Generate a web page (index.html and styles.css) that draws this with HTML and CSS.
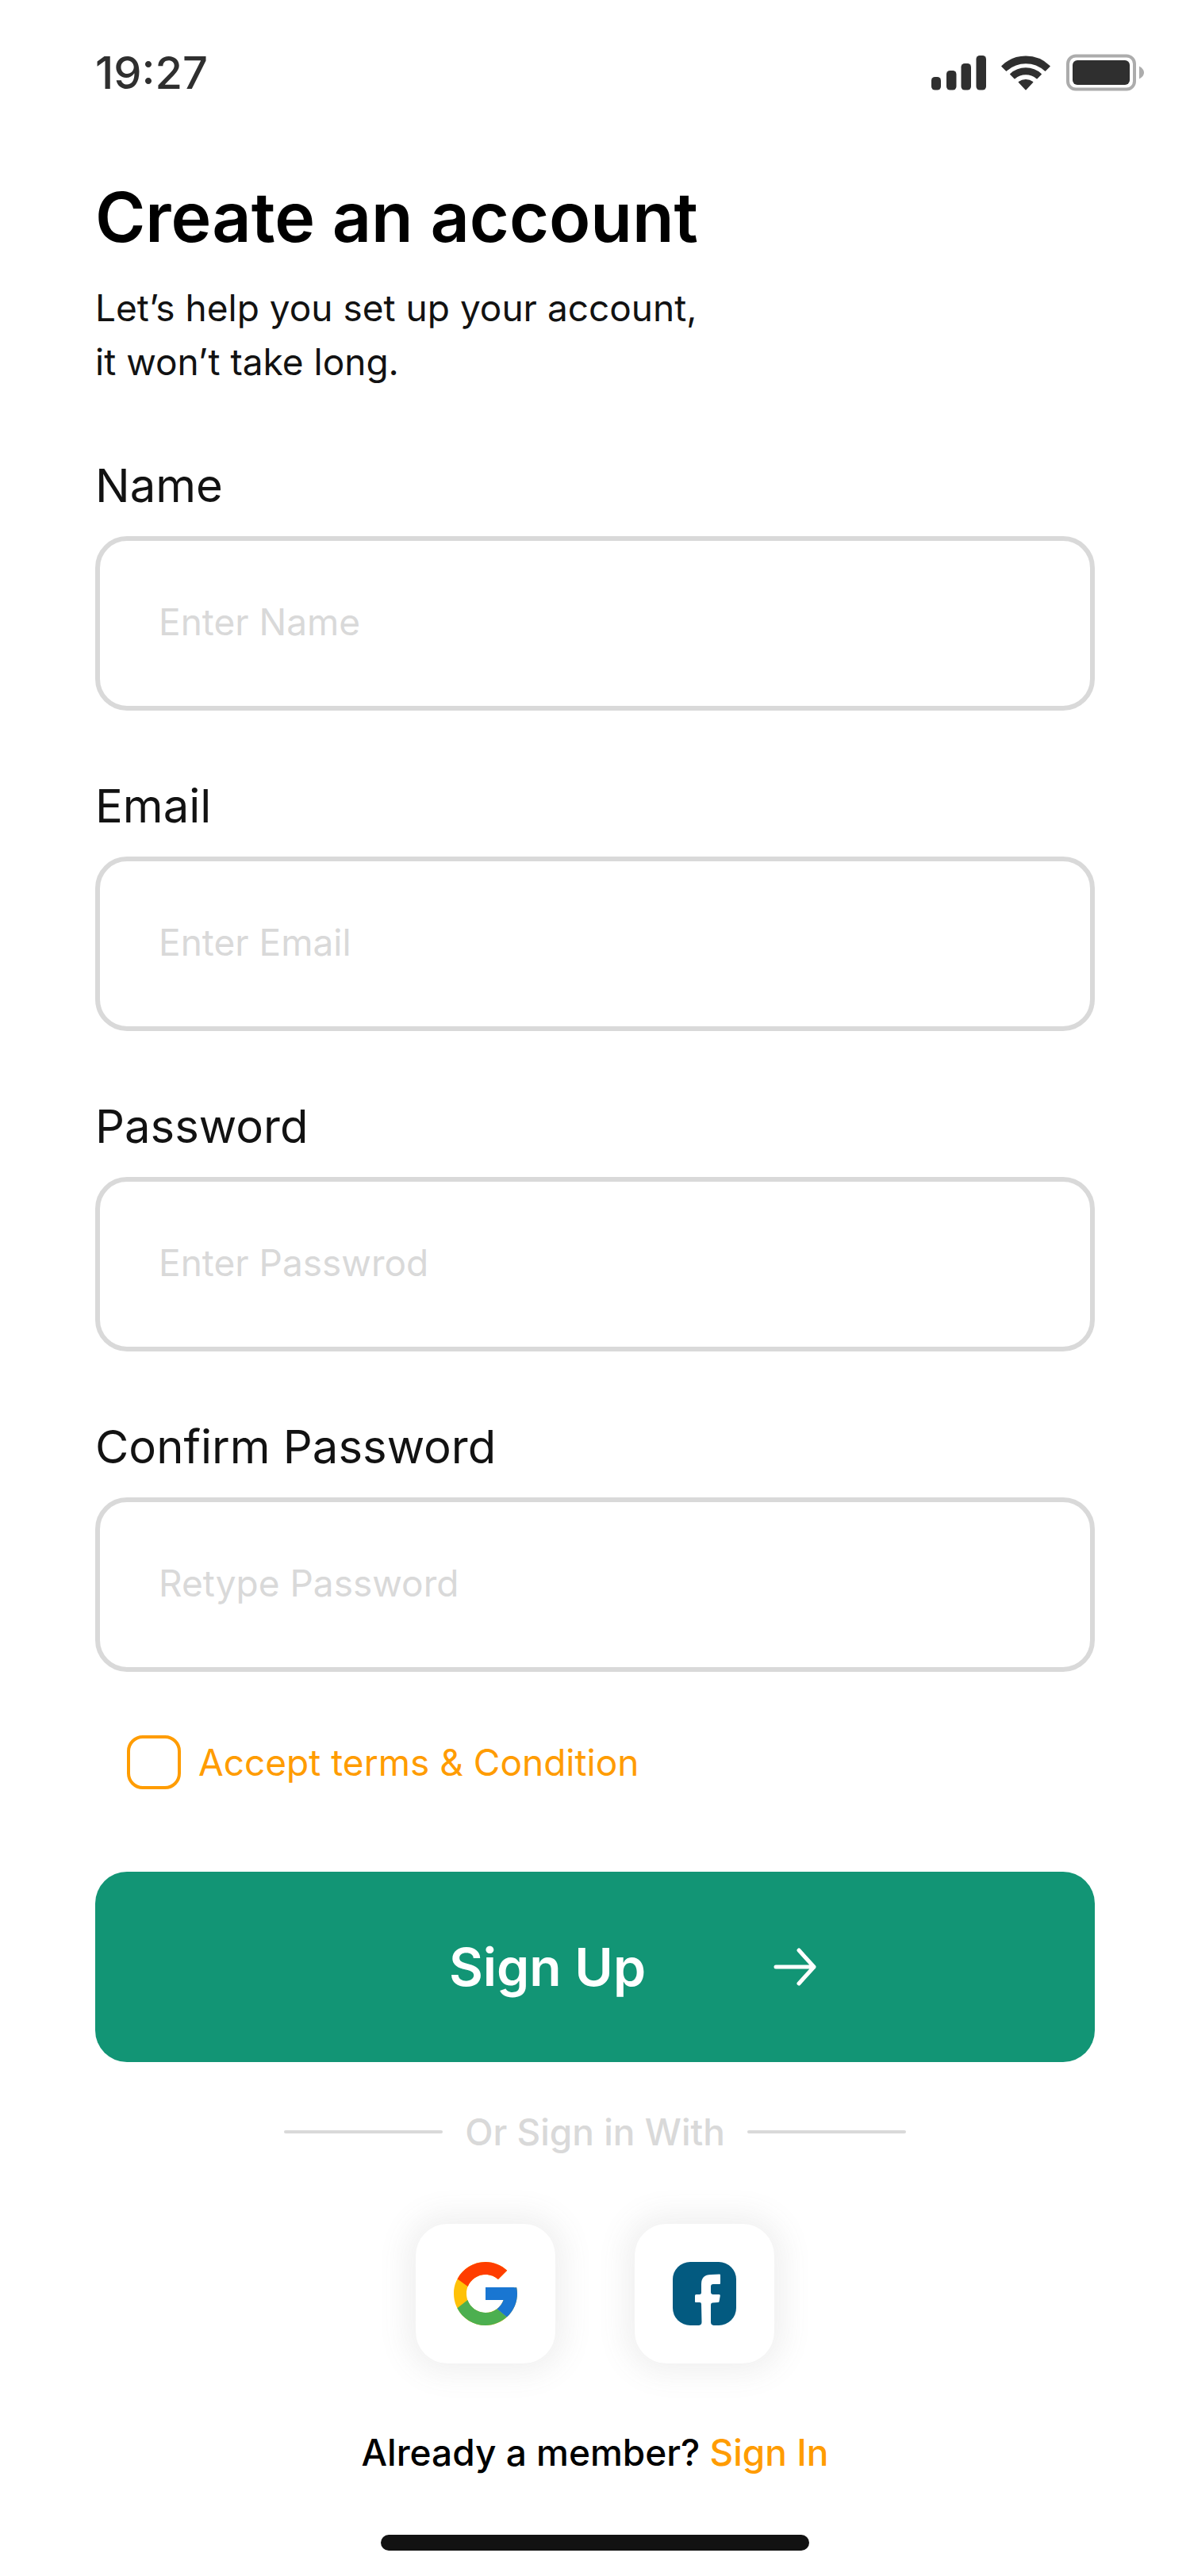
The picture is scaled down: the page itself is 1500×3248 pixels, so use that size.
FILE: index.html
```html
<!DOCTYPE html>
<html lang="en">
<head>
    <meta charset="UTF-8">
    <meta name="viewport" content="width=device-width, initial-scale=1">
    <title>Create an account</title>
    <link rel="stylesheet" href="styles.css">
</head>
<body>
    <!-- Status bar -->
    <header class="status-bar">
        <span class="time">19:27</span>
        <svg class="status-icons" viewBox="0 0 268 48" aria-hidden="true">
            <!-- signal -->
            <g fill="#2f2f2f">
                <rect x="0" y="29" width="12" height="16.500" rx="4.500" />
                <rect x="19" y="21" width="12.500" height="24.500" rx="4.500" />
                <rect x="37.500" y="12" width="12.500" height="33.500" rx="4.500" />
                <rect x="56.500" y="2" width="12.500" height="43.500" rx="4.500" />
            </g>
            <!-- wifi -->
            <g fill="#2f2f2f" stroke="#2f2f2f" stroke-width="1.500" stroke-linejoin="round">
                <path d="M89 15.500A43 43 0 0 1 149 15.500L143.500 21A36 36 0 0 0 94.500 21Z" />
                <path d="M99.800 25.500A28.300 28.300 0 0 1 138.200 25.500L133 30.700A21.500 21.500 0 0 0 105 30.700Z" />
                <path d="M110.400 35.600A14 14 0 0 1 127.600 35.600L119 44.800Z" />
            </g>
            <!-- battery -->
            <rect x="172" y="2.500" width="84" height="42" rx="10" fill="none" stroke="#acacac" stroke-width="4" />
            <rect x="178" y="8" width="72" height="31" rx="6" fill="#2f2f2f" />
            <path d="M262 15.500C270 19.500 270 27.500 262 31.500Z" fill="#acacac" />
        </svg>
    </header>

    <main class="signup">
        <h1>Create an account</h1>
        <p class="intro">Let’s help you set up your account,<br>it won’t take long.</p>

        <!-- Sign up form -->
        <form class="signup-form">
            <div class="field">
                <label for="name">Name</label>
                <input type="text" id="name" placeholder="Enter Name">
            </div>
            <div class="field">
                <label for="email">Email</label>
                <input type="email" id="email" placeholder="Enter Email">
            </div>
            <div class="field">
                <label for="password">Password</label>
                <input type="password" id="password" placeholder="Enter Passwrod">
            </div>
            <div class="field">
                <label for="confirm">Confirm Password</label>
                <input type="password" id="confirm" placeholder="Retype Password">
            </div>
            <div class="terms">
                <input type="checkbox" id="terms">
                <label for="terms">Accept terms &amp; Condition</label>
            </div>
            <button type="submit" class="submit">
                <span>Sign Up</span>
                <svg class="arrow" viewBox="0 0 56 52" aria-hidden="true">
                    <path d="M4 26H52M33 5L52 26L33 47" fill="none" stroke="#fff" stroke-width="5" stroke-linecap="round" stroke-linejoin="round" />
                </svg>
            </button>
        </form>

        <div class="divider">Or Sign in With</div>

        <!-- Social buttons -->
        <div class="social">
            <button type="button" aria-label="Google">
                <svg viewBox="4 4 40 40">
                    <path fill="#FFC107" d="M43.611 20.083H42V20H24v8h11.303c-1.649 4.657-6.080 8-11.303 8c-6.627 0-12-5.373-12-12s5.373-12 12-12c3.059 0 5.842 1.154 7.961 3.039l5.657-5.657C34.046 6.053 29.268 4 24 4C12.955 4 4 12.955 4 24s8.955 20 20 20s20-8.955 20-20c0-1.341-.138-2.650-.389-3.917" />
                    <path fill="#FF3D00" d="m6.306 14.691l6.571 4.819C14.655 15.108 18.961 12 24 12c3.059 0 5.842 1.154 7.961 3.039l5.657-5.657C34.046 6.053 29.268 4 24 4C16.318 4 9.656 8.337 6.306 14.691" />
                    <path fill="#4CAF50" d="M24 44c5.166 0 9.860-1.977 13.409-5.192l-6.190-5.238A11.910 11.910 0 0 1 24 36c-5.202 0-9.619-3.317-11.283-7.946l-6.522 5.025C9.505 39.556 16.227 44 24 44" />
                    <path fill="#1976D2" d="M43.611 20.083H42V20H24v8h11.303a12.040 12.040 0 0 1-4.087 5.571l.003-.002l6.190 5.238C36.971 39.205 44 34 44 24c0-1.341-.138-2.650-.389-3.917" />
                </svg>
            </button>
            <button type="button" aria-label="Facebook">
                <svg viewBox="0 0 80 80">
                    <rect width="80" height="80" rx="22" fill="#035a80" />
                    <path fill="#fff" d="M33 80Q36.500 79.500 36.500 76L36 53Q36 51 34 51H29Q28 51 28 50V42.500Q28 41 29.500 41H33.500Q36 41 36 38.500V28Q36 16 48 16L59 15.500Q60 15.500 60 16.500V27Q60 28 59 28H51Q48 28 48 31V38Q48 41 51 41H58.500Q60 41 59.800 42.500L58.500 50Q58.300 51 57 51L50 51.500Q48 51.500 48 54V76Q48 79.500 51.500 80Z" />
                </svg>
            </button>
        </div>

        <p class="member">Already a member? <a href="#">Sign In</a></p>
    </main>

    <!-- Home indicator -->
    <div class="home-bar"></div>
</body>
</html>
```
FILE: styles.css
```css
* {
    box-sizing: border-box;
}

body {
    margin: 0;
    background-color: #fff;
    color: #121212;
    font-family: Inter, "Liberation Sans", sans-serif;
    font-size: 46px;
    line-height: 68px;
}

h1,
p {
    margin: 0;
}

input,
button {
    margin: 0;
    font: inherit;
}

/* Status bar */
.status-bar {
    display: flex;
    align-items: center;
    justify-content: space-between;
    padding: 56px 58px 0 120px;
}

.time {
    color: #2f2f2f;
    font-size: 56px;
    font-weight: 500;
    line-height: 72px;
}

.status-icons {
    width: 268px;
    height: 48px;
}

.signup {
    padding: 86px 120px 0;
}

h1 {
    margin-bottom: 20px;
    color: #000;
    font-size: 86px;
    font-weight: 600;
    line-height: 120px;
}

.intro {
    margin-bottom: 82px;
}

/* Form */
.signup-form {
    display: flex;
    flex-direction: column;
    gap: 80px;
}

.field {
    display: flex;
    flex-direction: column;
    gap: 24px;
}

.field label {
    font-size: 58px;
    line-height: 80px;
}

.field input {
    width: 100%;
    height: 220px;
    padding: 0 74px 4px;
    border: 6px solid #d9d9d9;
    border-radius: 40px;
    background-color: #fff;
    color: #121212;
}

.field input::placeholder {
    color: #d9d9d9;
    opacity: 1;
}

.terms {
    display: flex;
    align-items: center;
    gap: 22px;
    padding-left: 40px;
    color: #ff9c00;
}

.terms input {
    appearance: none;
    width: 68px;
    height: 68px;
    border: 4px solid #ff9c00;
    border-radius: 20px;
}

.terms input:checked {
    background-color: #ff9c00;
}

.submit {
    display: flex;
    align-items: center;
    justify-content: center;
    gap: 160px;
    height: 240px;
    margin-top: 24px;
    padding: 0 0 0 96px;
    border: none;
    border-radius: 40px;
    background-color: #129575;
    color: #fff;
    font-size: 66px;
    font-weight: 600;
    cursor: pointer;
}

.arrow {
    width: 56px;
    height: 52px;
}

.divider {
    display: flex;
    align-items: center;
    justify-content: center;
    gap: 28px;
    margin-top: 54px;
    color: #d9d9d9;
    font-weight: 500;
}

.divider::before,
.divider::after {
    content: "";
    width: 200px;
    height: 4px;
    border-radius: 2px;
    background-color: #d9d9d9;
}

/* Social buttons */
.social {
    display: flex;
    justify-content: center;
    gap: 100px;
    margin-top: 82px;
}

.social button {
    display: flex;
    align-items: center;
    justify-content: center;
    width: 176px;
    height: 176px;
    padding: 0;
    border: none;
    border-radius: 40px;
    background-color: #fff;
    box-shadow: 0 0 36px 12px rgba(105, 105, 105, 0.1);
    cursor: pointer;
}

.social svg {
    width: 80px;
    height: 80px;
}

.member {
    margin-top: 78px;
    color: #000;
    font-weight: 500;
    text-align: center;
}

.member a {
    color: #ff9c00;
    text-decoration: none;
}

.home-bar {
    width: 36%;
    height: 20px;
    margin: 70px auto 32px;
    border-radius: 10px;
    background-color: #121212;
}
```
